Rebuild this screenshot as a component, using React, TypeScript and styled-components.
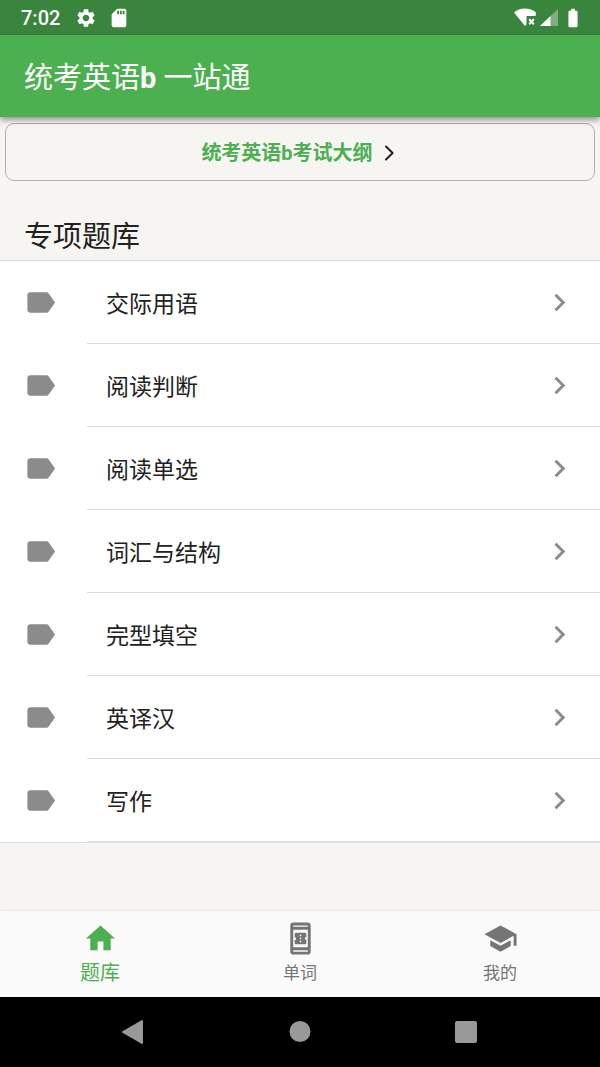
import React from "react";
import styled, { createGlobalStyle } from "styled-components";
import {
  MdBatteryFull,
  MdChevronRight,
  MdHome,
  MdLabel,
  MdOutlineBookOnline,
  MdSchool,
  MdSdCard,
  MdSettings,
} from "react-icons/md";

const GlobalStyle = createGlobalStyle`
  * { box-sizing: border-box; }
  body {
    margin: 0;
    background: #f7f5f2;
    color: #212121;
    font-family: Roboto, "Noto Sans CJK SC", sans-serif;
  }
  button { font: inherit; border: 0; padding: 0; background: none; cursor: pointer; }
`;

const Page = styled.div`
  min-height: 100vh;
  display: flex;
  flex-direction: column;
`;

const StatusBar = styled.div`
  height: 35px;
  padding: 0 16px 0 21px;
  display: flex;
  align-items: center;
  justify-content: space-between;
  background: #3a853d;
  color: #fff;
`;

const StatusGroup = styled.div<{ $gap: number }>`
  display: flex;
  align-items: center;
  gap: ${(p) => p.$gap}px;
`;

const Clock = styled.time`
  font-size: 20px;
  line-height: 24px;
  font-weight: 500;
  margin-right: 4px;
`;

const AppBar = styled.header`
  height: 82px;
  padding: 4px 24px 0;
  display: flex;
  align-items: center;
  background: #4caf50;
  box-shadow: 0 3px 6px rgba(0, 0, 0, 0.4);
  z-index: 1;
`;

const AppTitle = styled.h1`
  margin: 0;
  color: #fff;
  font-size: 29px;
  line-height: 36px;
  font-weight: 400;
`;

const Main = styled.main`
  flex: 1;
  padding-top: 6px;
`;

const OutlineRow = styled.div`
  display: flex;
  padding: 0 5px;
`;

const OutlineButton = styled.button`
  && {
    flex: 1;
    height: 58px;
    padding-top: 1px;
    display: flex;
    align-items: center;
    justify-content: center;
    gap: 8px;
    border: 1px solid #b0b0b2;
    border-radius: 9px;
    color: #4caf50;
    font-size: 20px;
    line-height: 24px;
    font-weight: 700;
  }
`;

const SectionTitle = styled.h2`
  margin: 0;
  padding: 38px 24px 5px;
  font-size: 29px;
  line-height: 36px;
  font-weight: 400;
`;

const List = styled.ul`
  list-style: none;
  margin: 0;
  padding: 0;
  background: #fff;
  border-top: 1px solid #dcdcdc;
  border-bottom: 1px solid #dcdcdc;
`;

const ListItem = styled.li`
  display: flex;
  height: 83px;
  background: linear-gradient(#dedede, #dedede) 87px 100% / 100% 1px no-repeat;
`;

const RowButton = styled.button`
  flex: 1;
  && { padding: 0 23px; }
  display: flex;
  align-items: center;
  color: #8b8b8b;
`;

const RowLabel = styled.span`
  flex: 1;
  margin-left: 48px;
  padding-top: 5px;
  text-align: left;
  color: #212121;
  font-size: 23px;
  line-height: 28px;
`;

const TabBar = styled.nav`
  height: 86px;
  display: flex;
  background: #fafafa;
  box-shadow: 0 -1px 2px rgba(0, 0, 0, 0.06);
`;

const Tab = styled.button<{ $active?: boolean }>`
  flex: 1;
  && { padding-top: 10px; }
  display: flex;
  flex-direction: column;
  align-items: center;
  color: ${(p) => (p.$active ? "#4caf50" : "#757575")};
  && { font-size: ${(p) => (p.$active ? 20 : 17)}px; }
  line-height: 24px;
`;

const TabLabel = styled.span`
  line-height: 35px;
`;

const SystemNav = styled.nav`
  height: 70px;
  display: flex;
  justify-content: center;
  background: #000;
`;

const SystemButton = styled.button`
  width: 28%;
  display: flex;
  align-items: center;
  justify-content: center;
`;

const WifiOff = () => (
  <svg width="24" height="20" viewBox="0 0 24 20" aria-hidden="true">
    <path
      fill="currentColor"
      d="M11 .5C6.800.5 3 2 0 4.400L11 18l1.500-1.800V8h9L22 4.400C19 2 15.200.5 11 .5z"
    />
    <path stroke="currentColor" strokeWidth="2" d="M15.200 11.300l4.600 5m0-5l-4.600 5" />
  </svg>
);

const Signal = () => (
  <svg width="20" height="20" viewBox="0 0 20 20" aria-hidden="true">
    <path fill="currentColor" opacity="0.35" d="M18 1v17H0z" />
    <path fill="currentColor" d="M10.500 8v10H0z" />
  </svg>
);

const ThinChevron = () => (
  <svg width="18" height="18" viewBox="0 0 18 18" fill="none" aria-hidden="true">
    <path
      d="M5 2.500L11.600 9 5 15.500"
      stroke="#212121"
      strokeWidth="2"
      strokeLinecap="round"
      strokeLinejoin="round"
    />
  </svg>
);

const topics = ["交际用语", "阅读判断", "阅读单选", "词汇与结构", "完型填空", "英译汉", "写作"];

const tabs = [
  { label: "题库", Icon: MdHome, active: true },
  { label: "单词", Icon: MdOutlineBookOnline, active: false },
  { label: "我的", Icon: MdSchool, active: false },
];

export default function App() {
  return (
    <Page>
      <GlobalStyle />
      <StatusBar>
        <StatusGroup $gap={11}>
          <Clock>7:02</Clock>
          <MdSettings size={22} />
          <MdSdCard size={22} />
        </StatusGroup>
        <StatusGroup $gap={2}>
          <WifiOff />
          <Signal />
          <MdBatteryFull size={22} />
        </StatusGroup>
      </StatusBar>
      <AppBar>
        <AppTitle>
          统考英语<b>b</b> 一站通
        </AppTitle>
      </AppBar>
      <Main>
        <OutlineRow>
          <OutlineButton type="button">
            统考英语b考试大纲
            <ThinChevron />
          </OutlineButton>
        </OutlineRow>
        <SectionTitle>专项题库</SectionTitle>
        <List>
          {topics.map((topic) => (
            <ListItem key={topic}>
              <RowButton type="button">
                <MdLabel size={35} />
                <RowLabel>{topic}</RowLabel>
                <MdChevronRight size={35} />
              </RowButton>
            </ListItem>
          ))}
        </List>
      </Main>
      <TabBar>
        {tabs.map(({ label, Icon, active }) => (
          <Tab key={label} type="button" $active={active} aria-current={active ? "page" : undefined}>
            <Icon size={35} />
            <TabLabel>{label}</TabLabel>
          </Tab>
        ))}
      </TabBar>
      <SystemNav>
        <SystemButton type="button" aria-label="返回">
          <svg width="24" height="26" viewBox="0 0 24 26" aria-hidden="true">
            <path
              d="M3 13L22 2v22z"
              fill="#999"
              stroke="#999"
              strokeWidth="2"
              strokeLinejoin="round"
            />
          </svg>
        </SystemButton>
        <SystemButton type="button" aria-label="主屏幕">
          <svg width="22" height="22" viewBox="0 0 22 22" aria-hidden="true">
            <circle cx="11" cy="10.500" r="10.500" fill="#999" />
          </svg>
        </SystemButton>
        <SystemButton type="button" aria-label="最近任务">
          <svg width="26" height="24" viewBox="0 0 26 24" aria-hidden="true">
            <rect x="0" y="1" width="22" height="22" rx="2" fill="#999" />
          </svg>
        </SystemButton>
      </SystemNav>
    </Page>
  );
}
